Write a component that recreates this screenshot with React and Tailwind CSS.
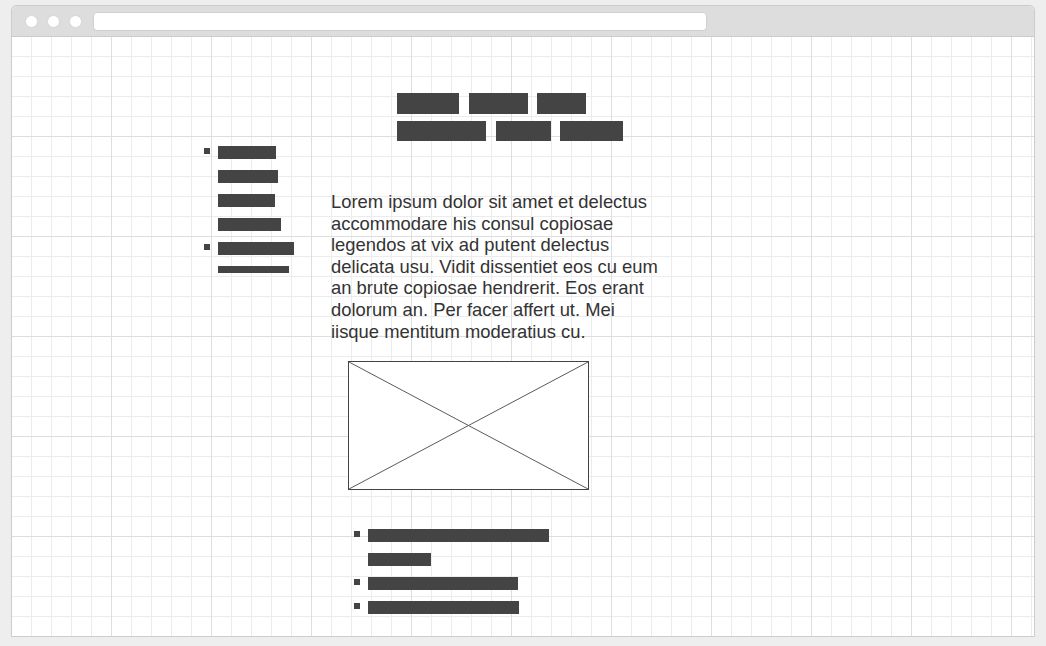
const leftList = [
  { bullet: true, bars: [58, 60, 57, 63] },
  { bullet: true, bars: [76] },
];

const bottomList = [
  { bullet: true, bars: [181, 63] },
  { bullet: true, bars: [150] },
  { bullet: true, bars: [151] },
];

const Bar = ({ w, h = 13 }) => (
  <div className="bg-[#444444]" style={{ width: w, height: h }} />
);

const BulletList = ({ items, last }) => (
  <ul className="flex flex-col">
    {items.map((item, i) => (
      <li key={i} className="flex gap-[8px]">
        <span className="mt-[2px] w-[6px] h-[6px] bg-[#444444] shrink-0" />
        <div className="flex flex-col">
          {item.bars.map((w, j) => (
            <div key={j} className="h-[24px]">
              <Bar w={w} />
            </div>
          ))}
        </div>
      </li>
    ))}
    {last}
  </ul>
);

export default function App() {
  return (
    <div className="w-[1046px] h-[646px] bg-[#eeeeee] pt-[5px] pl-[11px] overflow-hidden font-['Liberation_Sans',Arial,sans-serif]">
      <div className="w-[1024px] h-[632px] border border-[#cccccc] rounded-t-[5px] overflow-hidden flex flex-col bg-white">
        {/* title bar */}
        <div className="h-[31px] shrink-0 bg-[#dddddd] border-b border-[#cccccc] flex items-center pl-[13px]">
          <div className="flex gap-[9px] items-center">
            <span className="w-[13px] h-[13px] rounded-full bg-white border border-[#d6d6d6]" />
            <span className="w-[13px] h-[13px] rounded-full bg-white border border-[#d6d6d6]" />
            <span className="w-[13px] h-[13px] rounded-full bg-white border border-[#d6d6d6]" />
          </div>
          <div className="ml-[11px] w-[614px] h-[19px] bg-white rounded-[4px] border border-[#cfcfcf]" />
        </div>

        {/* grid canvas */}
        <div className="flex-1 bg-[linear-gradient(to_right,transparent_99px,#dedede_99px),linear-gradient(to_bottom,transparent_99px,#dedede_99px),linear-gradient(to_right,transparent_19px,#ececec_19px),linear-gradient(to_bottom,transparent_19px,#ececec_19px)] bg-size-[100px_100px,100px_100px,20px_20px,20px_20px]">
          {/* nav */}
          <div className="pt-[56px] pl-[385px] flex flex-col gap-[7px]">
            <div className="flex">
              <div className="w-[62px] h-[21px] bg-[#444444]" />
              <div className="ml-[10px] w-[59px] h-[21px] bg-[#444444]" />
              <div className="ml-[9px] w-[49px] h-[21px] bg-[#444444]" />
            </div>
            <div className="flex">
              <div className="w-[89px] h-[20px] bg-[#444444]" />
              <div className="ml-[10px] w-[55px] h-[20px] bg-[#444444]" />
              <div className="ml-[9px] w-[63px] h-[20px] bg-[#444444]" />
            </div>
          </div>

          <div className="mt-[5px] pl-[192px] flex">
            {/* sidebar */}
            <div className="w-[127px] shrink-0">
              <BulletList
                items={leftList}
                last={
                  <li className="pl-[14px]">
                    <Bar w={71} h={7} />
                  </li>
                }
              />
            </div>

            {/* main */}
            <div className="pt-[45px] flex flex-col">
              <p className="w-[330px] text-[18.4px] leading-[21.6px] text-[#333333]">
                Lorem ipsum dolor sit amet et delectus accommodare his consul
                copiosae legendos at vix ad putent delectus delicata usu. Vidit
                dissentiet eos cu eum an brute copiosae hendrerit. Eos erant
                dolorum an. Per facer affert ut. Mei iisque mentitum moderatius
                cu.
              </p>

              <div className="mt-[19px] ml-[17px] w-[241px] h-[129px] border border-[#444444] bg-white">
                <svg
                  width="100%"
                  height="100%"
                  viewBox="0 0 239 127"
                  preserveAspectRatio="none"
                >
                  <line x1="0" y1="0" x2="239" y2="127" stroke="#5a5a5a" strokeWidth="1" />
                  <line x1="239" y1="0" x2="0" y2="127" stroke="#5a5a5a" strokeWidth="1" />
                </svg>
              </div>

              <div className="mt-[39px] ml-[23px]">
                <BulletList items={bottomList} />
              </div>
            </div>
          </div>
        </div>
      </div>
    </div>
  );
}
